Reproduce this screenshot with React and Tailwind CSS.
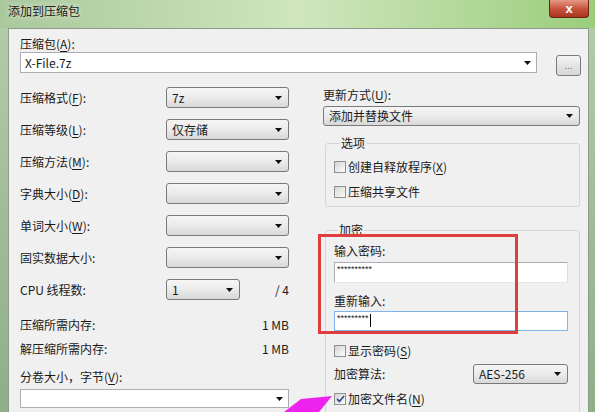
import React from "react";

const Arrow = () => (
  <svg width="7" height="4" viewBox="0 0 7 4" className="shrink-0">
    <path d="M0 0h7L3.5 4z" fill="#111" />
  </svg>
);

// raised Win7 drop-down list
const Combo = ({ value, className }) => (
  <div
    className={`${className} flex items-center justify-between pl-[5px] pr-[6px] rounded-[3px] border border-[#7a7a7a] bg-linear-to-b from-[#f5f5f5] via-[#ebebeb] to-[#d8d8d8] leading-[16px]`}
  >
    <span>{value}</span>
    <Arrow />
  </div>
);

const Check = ({ checked }) => (
  <span className="w-[12px] h-[12px] shrink-0 border border-[#8e8f8f] bg-linear-to-br from-[#d6d6d6] to-[#fbfbfb] flex items-center justify-center">
    {checked && (
      <svg width="9" height="8" viewBox="0 0 9 8">
        <path d="M1 4l2.5 2.5L8 1" stroke="#3a4f8f" strokeWidth="1.8" fill="none" />
      </svg>
    )}
  </span>
);

const CheckRow = ({ checked, children, className }) => (
  <div className={`${className} h-[16px] flex items-center gap-[2px] leading-[16px]`}>
    <Check checked={checked} />
    <span>{children}</span>
  </div>
);

const Key = ({ k }) => <span className="underline underline-offset-[2px]">{k}</span>;

const leftRows = [
  ["压缩格式", "F", "7z"],
  ["压缩等级", "L", "仅存储"],
  ["压缩方法", "M", ""],
  ["字典大小", "D", ""],
  ["单词大小", "W", ""],
  ["固实数据大小", null, ""],
];

export default function App() {
  return (
    <div className="relative w-[595px] h-[412px] overflow-hidden flex flex-col bg-linear-to-b from-[#b4cdaa] to-[#8fae86] font-['Noto_Sans_CJK_SC',sans-serif] text-[12px] text-[#1a1a1a]">
      {/* title bar */}
      <div className="h-[28px] shrink-0 flex items-start justify-between bg-linear-to-r from-[#a9c89c] via-[#cfe6be] to-[#9bcd7b]">
        <div className="pl-[8px] pt-[3px] leading-[16px] text-[#202020] [text-shadow:0_0_6px_#fff]">添加到压缩包</div>
        <div className="mr-[6px] w-[40px] h-[18px] rounded-b-[4px] border border-t-0 border-[#6b2418] bg-linear-to-b from-[#e49a86] via-[#c9553e] to-[#a83420] flex items-center justify-center text-white font-bold text-[13px] leading-none font-['Liberation_Sans',sans-serif]">
          x
        </div>
      </div>

      {/* dialog body */}
      <div className="flex-1 ml-[8px] mr-[6px] bg-[#f0f0f0] border border-b-0 border-[#8d9b8a] pl-[11px] pr-[7px] pt-[7px]">
        <div className="leading-[16px]">
          压缩包(<Key k="A" />):
        </div>
        <div className="flex items-start">
          <div className="flex-1 h-[21px] bg-white border border-[#abadb3] flex items-center justify-between pl-[4px] pr-[5px] leading-[16px]">
            <span>X-File.7z</span>
            <Arrow />
          </div>
          <div className="ml-[19px] mt-[3px] w-[25px] h-[21px] rounded-[3px] border border-[#7a7a7a] bg-linear-to-b from-[#f4f4f4] to-[#d6d6d6] flex items-center justify-center text-[9px] text-[#777] leading-none">
            ...
          </div>
        </div>

        <div className="flex mt-[11px]">
          {/* left column */}
          <div className="w-[269px] shrink-0">
            {leftRows.map(([label, key, value]) => (
              <div key={label} className="h-[21px] mb-[11px] flex items-center justify-between">
                <span className="leading-[16px]">
                  {label}
                  {key && (
                    <>
                      (<Key k={key} />)
                    </>
                  )}
                  :
                </span>
                <Combo value={value} className="w-[123px] h-[21px]" />
              </div>
            ))}
            <div className="h-[21px] flex items-center">
              <span className="w-[146px] leading-[16px]">CPU 线程数:</span>
              <Combo value="1" className="w-[74px] h-[21px]" />
              <span className="flex-1 text-right leading-[16px]">/ 4</span>
            </div>
            <div className="mt-[17px] h-[16px] leading-[16px] flex justify-between">
              <span>压缩所需内存:</span>
              <span>1 MB</span>
            </div>
            <div className="mt-[8px] h-[16px] leading-[16px] flex justify-between">
              <span>解压缩所需内存:</span>
              <span>1 MB</span>
            </div>
            <div className="mt-[12px] h-[16px] leading-[16px]">
              分卷大小，字节(<Key k="V" />):
            </div>
            <div className="mt-[4px] h-[19px] bg-white border border-[#abadb3] flex items-center justify-end pr-[5px]">
              <Arrow />
            </div>
          </div>

          {/* right column */}
          <div className="flex-1 ml-[34px] mr-[1px]">
            <div className="h-[16px] leading-[16px]">
              更新方式(<Key k="U" />):
            </div>
            <Combo value="添加并替换文件" className="mt-[3px] h-[20px]" />

            <fieldset className="mt-[9px] ml-[2px] border border-[#d0d8dd] rounded-[3px] pl-[8px] pt-[8px] pb-[6px]">
              <legend className="ml-[6px] px-[1px] leading-[16px]">选项</legend>
              <CheckRow>
                创建自释放程序(<Key k="X" />)
              </CheckRow>
              <CheckRow className="mt-[9px]">压缩共享文件</CheckRow>
            </fieldset>

            <fieldset className="mt-[15px] ml-[2px] border border-[#d0d8dd] rounded-[3px] pl-[8px] pr-[11px] pt-[5px] pb-[10px]">
              <legend className="ml-[4px] px-[1px] leading-[16px]">加密</legend>
              <div className="h-[16px] leading-[16px]">输入密码:</div>
              <div className="mt-[3px] h-[21px] bg-white border border-[#abadb3] border-b-[#e3e9ef] border-r-[#dbdfe6] pl-[2px] pt-[1px] flex items-start">
                <span className="text-[9px] leading-[10px] font-['Liberation_Sans',sans-serif]">**********</span>
              </div>
              <div className="mt-[10px] h-[16px] leading-[16px]">重新输入:</div>
              <div className="mt-[2px] h-[20px] bg-white border border-[#7eb4ea] pl-[2px] pt-[1px] flex items-start">
                <span className="text-[9px] leading-[10px] font-['Liberation_Sans',sans-serif]">*********</span>
                <span className="w-[1px] h-[13px] bg-black ml-[1px] mt-[1px]" />
              </div>
              <CheckRow className="mt-[12px]">
                显示密码(<Key k="S" />)
              </CheckRow>
              <div className="mt-[5px] h-[20px] flex items-center justify-between">
                <span className="leading-[16px]">加密算法:</span>
                <Combo value="AES-256" className="w-[95px] h-[20px]" />
              </div>
              <CheckRow checked className="mt-[7px]">
                加密文件名(<Key k="N" />)
              </CheckRow>
            </fieldset>
          </div>
        </div>
      </div>

      {/* annotation overlays */}
      <div className="absolute left-[318px] top-[234px] w-[200px] h-[100px] border-[3px] border-[#e03e3c]" />
      <svg className="absolute left-[270px] top-[380px]" width="80" height="32" viewBox="0 0 80 32">
        <polygon points="14,32 31,19 62,16 49,32" fill="#ee22ee" />
      </svg>
    </div>
  );
}
